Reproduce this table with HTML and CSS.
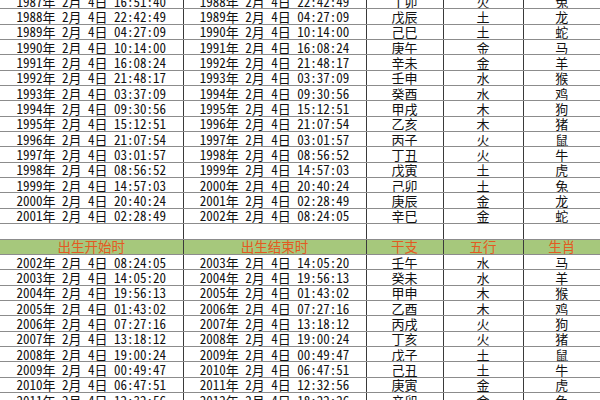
FILE: index.html
```html
<!DOCTYPE html>
<html lang="zh">
<head>
<meta charset="utf-8">
<link rel="stylesheet" href="styles.css">
</head>
<body>
<table class="sheet">
<colgroup><col class="c-date"><col class="c-date"><col class="c-gz"><col class="c-wx"><col class="c-sx"></colgroup>
<tbody>
<tr><td>1987年 2月 4日 16:51:40</td><td>1988年 2月 4日 22:42:49</td><td>丁卯</td><td>火</td><td>兔</td></tr>
<tr><td>1988年 2月 4日 22:42:49</td><td>1989年 2月 4日 04:27:09</td><td>戊辰</td><td>土</td><td>龙</td></tr>
<tr><td>1989年 2月 4日 04:27:09</td><td>1990年 2月 4日 10:14:00</td><td>己巳</td><td>土</td><td>蛇</td></tr>
<tr><td>1990年 2月 4日 10:14:00</td><td>1991年 2月 4日 16:08:24</td><td>庚午</td><td>金</td><td>马</td></tr>
<tr><td>1991年 2月 4日 16:08:24</td><td>1992年 2月 4日 21:48:17</td><td>辛未</td><td>金</td><td>羊</td></tr>
<tr><td>1992年 2月 4日 21:48:17</td><td>1993年 2月 4日 03:37:09</td><td>壬申</td><td>水</td><td>猴</td></tr>
<tr><td>1993年 2月 4日 03:37:09</td><td>1994年 2月 4日 09:30:56</td><td>癸酉</td><td>水</td><td>鸡</td></tr>
<tr><td>1994年 2月 4日 09:30:56</td><td>1995年 2月 4日 15:12:51</td><td>甲戌</td><td>木</td><td>狗</td></tr>
<tr><td>1995年 2月 4日 15:12:51</td><td>1996年 2月 4日 21:07:54</td><td>乙亥</td><td>木</td><td>猪</td></tr>
<tr><td>1996年 2月 4日 21:07:54</td><td>1997年 2月 4日 03:01:57</td><td>丙子</td><td>火</td><td>鼠</td></tr>
<tr><td>1997年 2月 4日 03:01:57</td><td>1998年 2月 4日 08:56:52</td><td>丁丑</td><td>火</td><td>牛</td></tr>
<tr><td>1998年 2月 4日 08:56:52</td><td>1999年 2月 4日 14:57:03</td><td>戊寅</td><td>土</td><td>虎</td></tr>
<tr><td>1999年 2月 4日 14:57:03</td><td>2000年 2月 4日 20:40:24</td><td>己卯</td><td>土</td><td>兔</td></tr>
<tr><td>2000年 2月 4日 20:40:24</td><td>2001年 2月 4日 02:28:49</td><td>庚辰</td><td>金</td><td>龙</td></tr>
<tr><td>2001年 2月 4日 02:28:49</td><td>2002年 2月 4日 08:24:05</td><td>辛巳</td><td>金</td><td>蛇</td></tr>
<tr class="blank"><td></td><td></td><td></td><td></td><td></td></tr>
<tr class="head"><td>出生开始时</td><td>出生结束时</td><td>干支</td><td>五行</td><td>生肖</td></tr>
<tr><td>2002年 2月 4日 08:24:05</td><td>2003年 2月 4日 14:05:20</td><td>壬午</td><td>水</td><td>马</td></tr>
<tr><td>2003年 2月 4日 14:05:20</td><td>2004年 2月 4日 19:56:13</td><td>癸未</td><td>水</td><td>羊</td></tr>
<tr><td>2004年 2月 4日 19:56:13</td><td>2005年 2月 4日 01:43:02</td><td>甲申</td><td>木</td><td>猴</td></tr>
<tr><td>2005年 2月 4日 01:43:02</td><td>2006年 2月 4日 07:27:16</td><td>乙酉</td><td>木</td><td>鸡</td></tr>
<tr><td>2006年 2月 4日 07:27:16</td><td>2007年 2月 4日 13:18:12</td><td>丙戌</td><td>火</td><td>狗</td></tr>
<tr><td>2007年 2月 4日 13:18:12</td><td>2008年 2月 4日 19:00:24</td><td>丁亥</td><td>火</td><td>猪</td></tr>
<tr><td>2008年 2月 4日 19:00:24</td><td>2009年 2月 4日 00:49:47</td><td>戊子</td><td>土</td><td>鼠</td></tr>
<tr><td>2009年 2月 4日 00:49:47</td><td>2010年 2月 4日 06:47:51</td><td>己丑</td><td>土</td><td>牛</td></tr>
<tr><td>2010年 2月 4日 06:47:51</td><td>2011年 2月 4日 12:32:56</td><td>庚寅</td><td>金</td><td>虎</td></tr>
<tr><td>2011年 2月 4日 12:32:56</td><td>2012年 2月 4日 18:22:26</td><td>辛卯</td><td>金</td><td>兔</td></tr>
</tbody>
</table>
</body>
</html>
```

FILE: styles.css
```css
html, body {
  margin: 0;
  padding: 0;
  background: #ffffff;
}
body {
  width: 600px;
  height: 400px;
  overflow: hidden;
}
.sheet {
  margin-top: -7px;
  width: 600px;
  border-collapse: collapse;
  table-layout: fixed;
  font-family: "Noto Sans Mono CJK SC", "Liberation Mono", "Noto Sans CJK SC", monospace;
  font-size: 13px;
  color: #111111;
}
.c-date { width: 183px; }
.c-gz { width: 77px; }
.c-wx { width: 80px; }
.c-sx { width: 77px; }
.sheet td {
  height: 14.35px;
  padding: 0;
  line-height: 13px;
  text-align: center;
  white-space: pre;
  overflow: hidden;
  border-top: 1px solid #8c8c8c;
  border-bottom: 1px solid #8c8c8c;
  border-left: 1px solid #3a3a3a;
  border-right: 1px solid #3a3a3a;
}
.sheet td:first-child { border-left: none; }
.sheet td:last-child { border-right: none; }
.head td {
  background: #a6c87c;
  color: #e35a22;
  font-family: "Noto Sans CJK SC", sans-serif;
  font-size: 13.5px;
}
```
